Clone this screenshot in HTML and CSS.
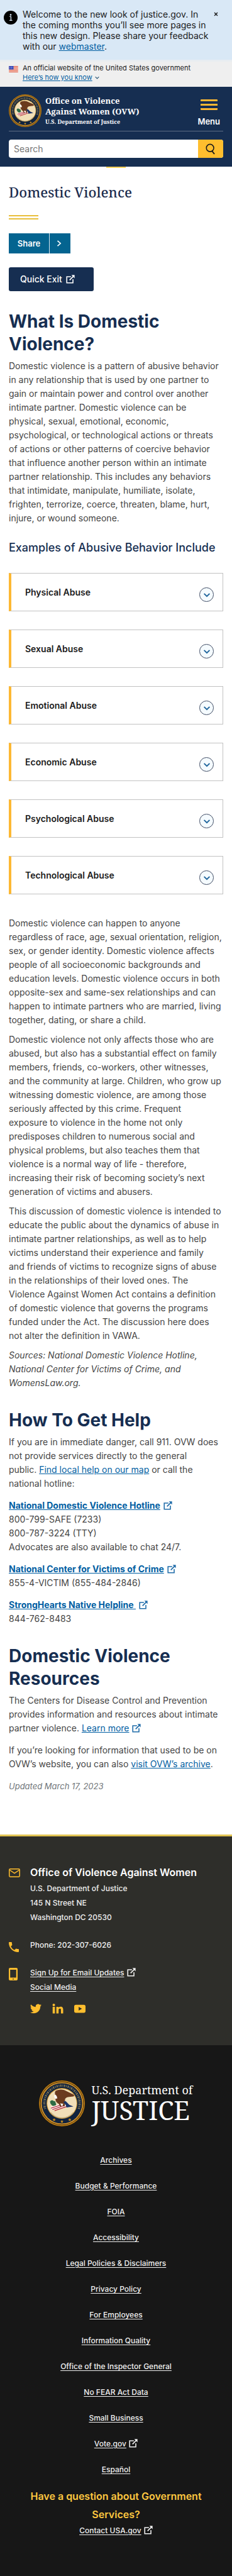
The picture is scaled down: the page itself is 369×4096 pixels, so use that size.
FILE: index.html
```
<!DOCTYPE html>
<html lang="en">
<head>
<meta charset="utf-8">
<meta name="viewport" content="width=device-width, initial-scale=1">
<title>Domestic Violence | Office on Violence Against Women</title>
<link rel="stylesheet" href="styles.css">
</head>
<body>
<svg class="sprite" aria-hidden="true">
  <symbol id="external" viewBox="0 0 16 16">
    <path d="M9 3.4H1.4v11.2h11.2V8" fill="none" stroke="currentColor" stroke-width="1.8"/>
    <path d="M6.5 9.5 13.6 2.4" fill="none" stroke="currentColor" stroke-width="1.9"/>
    <path d="M9.8.4h5.8v5.8z" fill="currentColor"/>
  </symbol>
  <symbol id="chevron-down" viewBox="0 0 16 16">
    <path d="M3 5.5 8 10.5 13 5.5" fill="none" stroke="currentColor" stroke-width="2.2"/>
  </symbol>
  <symbol id="seal" viewBox="0 0 100 100">
    <circle cx="50" cy="50" r="50" fill="#b97a12"/>
    <circle cx="50" cy="50" r="47.6" fill="#3b2c14"/>
    <circle cx="50" cy="50" r="46.4" fill="#d8952a"/>
    <circle cx="50" cy="50" r="44" fill="#10233f"/>
    <path d="M13.5 62A38.5 38.5 0 1 1 86.5 62" fill="none" stroke="#7a7050" stroke-width="5" stroke-dasharray="1.6 1.7 3 1.9"/>
    <path d="M33 82.2l1.1 2.2 2.4.3-1.8 1.7.5 2.4-2.2-1.2-2.2 1.2.5-2.4-1.8-1.7 2.4-.3zM50 86l1.1 2.2 2.4.3-1.8 1.7.5 2.4-2.2-1.2-2.2 1.2.5-2.4-1.8-1.7 2.4-.3zM67 82.2l1.1 2.2 2.4.3-1.8 1.7.5 2.4-2.2-1.2-2.2 1.2.5-2.4-1.8-1.7 2.4-.3z" fill="#c78d22"/>
    <circle cx="50" cy="50" r="33.5" fill="#c9922c"/>
    <circle cx="50" cy="50" r="32" fill="#f1dfb8"/>
    <path d="M26 70A31 31 0 0 0 75 69" fill="none" stroke="#b9a77c" stroke-width="2.5" stroke-dasharray="1.5 1.2"/>
    <path d="M24 46q4-5 8-1 5 0 4 4 3 3 0 6-5 2-8-1-4-3-4-8z" fill="#2f6b45"/>
    <path d="M25 58 54 49l7 7-32 9z" fill="#fff"/>
    <path d="M26 60.5 53 52M29 63.5 56 54.5M34 66 60 57" stroke="#b5283a" stroke-width="1.9" fill="none"/>
    <path d="M35 30q-2-8 6-9 7-2 14 0l19 9q5 3 1 5l-9 1q-6 0-9 4l-1 9q2 4-1 8l-5-3-3 4-4-7q-6-3-7-9 0-4-1-12z" fill="#6b3a1e"/>
    <path d="M34 31q-2 5 2 9l4-1q0-5-4-8z" fill="#fff"/>
    <path d="M53 47l5 6 2 6 15-2-9-4-8-8z" fill="#1c3468"/>
    <path d="M46 50l4 7 3-6z" fill="#fff"/>
  </symbol>
</svg>

<section class="notice" aria-label="Site notice">
  <svg class="notice-icon" viewBox="0 0 22 22" aria-hidden="true">
    <circle cx="11" cy="11" r="11" fill="#000"/>
    <circle cx="11" cy="6.6" r="1.3" fill="#d9e8f6"/>
    <path d="M9.2 9.4h2.2v6M9 15.4h4.6" fill="none" stroke="#d9e8f6" stroke-width="1.3"/>
  </svg>
  <p class="notice-text">Welcome to the new look of justice.gov. In the coming months you’ll see more pages in this new design. Please share your feedback with our <a class="link" href="#webmaster">webmaster</a>.</p>
  <button class="notice-close" type="button" aria-label="Close notice">
    <svg viewBox="0 0 8 8" aria-hidden="true"><path d="M1.2 1.2 6.8 6.8M6.8 1.2 1.2 6.8" stroke="#1b1b1b" stroke-width="1.6"/></svg>
  </button>
</section>

<section class="gov" aria-label="Official website of the United States government">
  <svg class="gov-flag" viewBox="0 0 16 11" aria-hidden="true">
    <path d="M0 0h16v11H0z" fill="#fff"/>
    <path d="M0 .5h16M0 2.5h16M0 4.5h16M0 6.5h16M0 8.5h16M0 10.5h16" stroke="#db3e1f"/>
    <path d="M0 0h8v6H0z" fill="#1e33b1"/>
    <path d="M1 1.5h6M1 3h6M1 4.5h6" stroke="#fff" stroke-width=".8" stroke-dasharray=".8 1"/>
  </svg>
  <div>
    <p>An official website of the United States government</p>
    <button class="gov-toggle" type="button" aria-expanded="false"><span>Here’s how you know</span><svg viewBox="0 0 16 16" aria-hidden="true"><use href="#chevron-down"/></svg></button>
  </div>
</section>

<header class="header">
  <div class="brand-row">
    <a class="brand" href="#home">
      <svg class="brand-seal" aria-hidden="true"><use href="#seal"/></svg>
      <span class="brand-text">
        <span class="brand-name">Office on Violence</span>
        <span class="brand-name">Against Women (OVW)</span>
        <span class="brand-dept">U.S. Department of Justice</span>
      </span>
    </a>
    <button class="menu" type="button">
      <span class="menu-bars" aria-hidden="true"></span>
      <span>Menu</span>
    </button>
  </div>
  <form class="search" role="search">
    <input class="search-input" type="search" placeholder="Search" aria-label="Search">
    <button class="search-button" type="submit" aria-label="Search">
      <svg viewBox="0 0 18 20" aria-hidden="true"><circle cx="8" cy="8" r="6.6" fill="none" stroke="#1b1b1b" stroke-width="1.8"/><path d="M11.5 13.5 15.8 19" stroke="#1b1b1b" stroke-width="2.2"/></svg>
    </button>
  </form>
</header>
<div class="marker"></div>

<main class="main">
  <h1 class="page-title">Domestic Violence</h1>
  <div class="rule"></div>
  <button class="share" type="button">
    <span class="share-label">Share</span>
    <span class="share-arrow"><svg viewBox="0 0 8 10" aria-hidden="true"><path d="M1.5.8 6.2 5 1.5 9.2" fill="none" stroke="#fff" stroke-width="1.6"/></svg></span>
  </button>
  <a class="quick-exit" href="#exit">Quick Exit <svg class="ext" aria-hidden="true"><use href="#external"/></svg></a>

  <section>
    <h2 class="heading">What Is Domestic Violence?</h2>
    <div class="prose">
      <p>Domestic violence is a pattern of abusive behavior in any relationship that is used by one partner to gain or maintain power and control over another intimate partner. Domestic violence can be physical, sexual, emotional, economic, psychological, or technological actions or threats of actions or other patterns of coercive behavior that influence another person within an intimate partner relationship. This includes any behaviors that intimidate, manipulate, humiliate, isolate, frighten, terrorize, coerce, threaten, blame, hurt, injure, or wound someone.</p>
    </div>
  </section>

  <section>
    <h3 class="subheading">Examples of Abusive Behavior Include</h3>
    <div class="accordion">
      <button class="accordion-item" type="button" aria-expanded="false"><span>Physical Abuse</span><span class="accordion-icon"><svg viewBox="0 0 16 16" aria-hidden="true"><use href="#chevron-down"/></svg></span></button>
      <button class="accordion-item" type="button" aria-expanded="false"><span>Sexual Abuse</span><span class="accordion-icon"><svg viewBox="0 0 16 16" aria-hidden="true"><use href="#chevron-down"/></svg></span></button>
      <button class="accordion-item" type="button" aria-expanded="false"><span>Emotional Abuse</span><span class="accordion-icon"><svg viewBox="0 0 16 16" aria-hidden="true"><use href="#chevron-down"/></svg></span></button>
      <button class="accordion-item" type="button" aria-expanded="false"><span>Economic Abuse</span><span class="accordion-icon"><svg viewBox="0 0 16 16" aria-hidden="true"><use href="#chevron-down"/></svg></span></button>
      <button class="accordion-item" type="button" aria-expanded="false"><span>Psychological Abuse</span><span class="accordion-icon"><svg viewBox="0 0 16 16" aria-hidden="true"><use href="#chevron-down"/></svg></span></button>
      <button class="accordion-item" type="button" aria-expanded="false"><span>Technological Abuse</span><span class="accordion-icon"><svg viewBox="0 0 16 16" aria-hidden="true"><use href="#chevron-down"/></svg></span></button>
    </div>
    <div class="prose prose-long">
      <p>Domestic violence can happen to anyone regardless of race, age, sexual orientation, religion, sex, or gender identity. Domestic violence affects people of all socioeconomic backgrounds and education levels. Domestic violence occurs in both opposite-sex and same-sex relationships and can happen to intimate partners who are married, living together, dating, or share a child.</p>
      <p>Domestic violence not only affects those who are abused, but also has a substantial effect on family members, friends, co-workers, other witnesses, and the community at large. Children, who grow up witnessing domestic violence, are among those seriously affected by this crime. Frequent<br>exposure to violence in the home not only<br>predisposes children to numerous social and<br>physical problems, but also teaches them that<br>violence is a normal way of life&nbsp;- therefore,<br>increasing their risk of becoming society’s next generation of victims and abusers.</p>
      <p>This discussion of domestic violence is intended to educate the public about the dynamics of abuse in intimate partner relationships, as well as to help victims understand their experience and family<br>and friends of victims to recognize signs of abuse<br>in the relationships of their loved ones. The<br>Violence Against Women Act contains a definition<br>of domestic violence that governs the programs funded under the Act. The discussion here does not alter the definition in VAWA.</p>
      <p><em>Sources: National Domestic Violence Hotline, National Center for Victims of Crime, and WomensLaw.org.</em></p>
    </div>
  </section>

  <section>
    <h2 class="heading">How To Get Help</h2>
    <div class="prose">
      <p>If you are in immediate danger, call 911. OVW does not provide services directly to the general<br>public. <a class="link" href="#map">Find local help on our map</a> or call the<br>national hotline:</p>
      <p><a class="link strong" href="#hotline">National Domestic Violence Hotline</a> <svg class="ext ext-blue" aria-hidden="true"><use href="#external"/></svg><br>800-799-SAFE (7233)<br>800-787-3224 (TTY)<br>Advocates are also available to chat 24/7.</p>
      <p><a class="link strong" href="#victims">National Center for Victims of Crime</a> <svg class="ext ext-blue" aria-hidden="true"><use href="#external"/></svg><br>855-4-VICTIM (855-484-2846)</p>
      <p><a class="link strong" href="#native">StrongHearts Native Helpline&nbsp;</a> <svg class="ext ext-blue" aria-hidden="true"><use href="#external"/></svg><br>844-762-8483</p>
    </div>
  </section>

  <section>
    <h2 class="heading">Domestic Violence Resources</h2>
    <div class="prose">
      <p>The Centers for Disease Control and Prevention provides information and resources about intimate partner violence. <a class="link" href="#cdc">Learn more</a> <svg class="ext ext-blue" aria-hidden="true"><use href="#external"/></svg></p>
      <p>If you’re looking for information that used to be on OVW’s website, you can also <a class="link" href="#archive">visit OVW’s archive</a>.</p>
      <p class="updated">Updated March 17, 2023</p>
    </div>
  </section>
</main>

<footer>
  <section class="contact" aria-label="Contact">
    <div class="contact-row">
      <svg class="icon-mail" viewBox="0 0 18 14" aria-hidden="true"><rect x=".8" y=".8" width="16.4" height="12.4" rx="1.4" fill="none" stroke="#ffbe2e" stroke-width="1.5"/><path d="M1.5 2.5 9 7.5l7.5-5" fill="none" stroke="#ffbe2e" stroke-width="1.5"/></svg>
      <div class="contact-text">
        <h2 class="contact-title">Office of Violence Against Women</h2>
        <address class="contact-address">U.S. Department of Justice<br>145 N Street NE<br>Washington DC 20530</address>
      </div>
    </div>
    <div class="contact-row">
      <svg class="icon-phone" viewBox="0 0 18 18" aria-hidden="true"><path d="M3.62 7.79c1.44 2.83 3.76 5.14 6.59 6.59l2.2-2.2c.27-.27.67-.36 1.02-.24 1.12.37 2.33.57 3.57.57.55 0 1 .45 1 1V17c0 .55-.45 1-1 1C7.61 18 0 10.39 0 1c0-.55.45-1 1-1h3.5c.55 0 1 .45 1 1 0 1.25.2 2.45.57 3.57.11.35.03.74-.25 1.02l-2.2 2.2z" fill="#ffbe2e"/></svg>
      <p>Phone: 202-307-6026</p>
    </div>
    <div class="contact-row">
      <svg class="icon-device" viewBox="0 0 14 20" aria-hidden="true"><path fill-rule="evenodd" d="M2 0h10a2 2 0 0 1 2 2v16a2 2 0 0 1-2 2H2a2 2 0 0 1-2-2V2a2 2 0 0 1 2-2zm.2 3v12.6h9.600V3zM6 17.300v1.200h2v-1.200z" fill="#ffbe2e"/></svg>
      <div>
        <p><a href="#updates">Sign Up for Email Updates</a> <svg class="ext" aria-hidden="true"><use href="#external"/></svg></p>
        <p><a href="#social">Social Media</a></p>
        <div class="social">
          <a href="#twitter" aria-label="Twitter"><svg viewBox="0 0 24 24" aria-hidden="true"><path d="M23.950 4.570a10 10 0 0 1-2.820.77 4.960 4.960 0 0 0 2.160-2.720c-.95.55-2 .95-3.130 1.180a4.920 4.920 0 0 0-8.380 4.480C7.690 8.090 4.070 6.130 1.640 3.160a4.920 4.920 0 0 0 1.520 6.570 4.900 4.900 0 0 1-2.230-.61v.06c0 2.390 1.690 4.380 3.950 4.830a5 5 0 0 1-2.210.08 4.940 4.940 0 0 0 4.600 3.420A9.870 9.870 0 0 1 0 19.540a14 14 0 0 0 7.550 2.210c9.050 0 14-7.500 14-13.980 0-.21 0-.42-.02-.63a9.940 9.940 0 0 0 2.460-2.550z" fill="#ffbe2e"/></svg></a>
          <a href="#linkedin" aria-label="LinkedIn"><svg viewBox="0 0 24 24" aria-hidden="true"><path d="M1 8h4.800v14H1zM3.400 1.200a2.700 2.700 0 1 1 0 5.400 2.700 2.700 0 0 1 0-5.400zM8.800 8h4.500v2c.8-1.400 2.300-2.400 4.400-2.400 4.500 0 5.600 2.800 5.600 6.700V22h-4.700v-6.900c0-1.700-.2-3.500-2.300-3.500s-2.700 1.700-2.700 3.400v7H8.800z" fill="#ffbe2e"/></svg></a>
          <a href="#youtube" aria-label="YouTube"><svg viewBox="0 0 24 24" aria-hidden="true"><path fill-rule="evenodd" d="M3.500 3.500h17Q24 3.500 24 7v10q0 3.500-3.500 3.500h-17Q0 20.500 0 17V7q0-3.500 3.500-3.500zM9.500 8v8l7-4z" fill="#ffbe2e"/></svg></a>
        </div>
      </div>
    </div>
  </section>
  <section class="agency" aria-label="U.S. Department of Justice">
    <a class="agency-logo" href="#doj">
      <svg class="agency-seal" aria-hidden="true"><use href="#seal"/></svg>
      <span class="agency-text"><span class="agency-small">U.S. Department of</span><span class="agency-large">JUSTICE</span></span>
    </a>
    <ul class="agency-links">
      <li><a href="#archives">Archives</a></li>
      <li><a href="#budget">Budget &amp; Performance</a></li>
      <li><a href="#foia">FOIA</a></li>
      <li><a href="#accessibility">Accessibility</a></li>
      <li><a href="#legal">Legal Policies &amp; Disclaimers</a></li>
      <li><a href="#privacy">Privacy Policy</a></li>
      <li><a href="#employees">For Employees</a></li>
      <li><a href="#quality">Information Quality</a></li>
      <li><a href="#oig">Office of the Inspector General</a></li>
      <li><a href="#nofear">No FEAR Act Data</a></li>
      <li><a href="#business">Small Business</a></li>
      <li><a href="#vote">Vote.gov</a> <svg class="ext" aria-hidden="true"><use href="#external"/></svg></li>
      <li><a href="#es" lang="es">Español</a></li>
    </ul>
    <h2 class="question">Have a question about Government Services?</h2>
    <p class="usagov"><a href="#usagov">Contact USA.gov</a> <svg class="ext" aria-hidden="true"><use href="#external"/></svg></p>
  </section>
</footer>
</body>
</html>
```
FILE: styles.css
```
* { box-sizing: border-box; }

body {
  margin: 0;
  background: #fff;
  color: #454545;
  font-family: Inter, "Liberation Sans", sans-serif;
  font-size: 14px;
  line-height: 22px;
}

h1, h2, h3, p, ul { margin: 0; padding: 0; font-weight: inherit; }
button, input { font: inherit; color: inherit; border: 0; margin: 0; padding: 0; background: none; }
button { cursor: pointer; }
svg { display: block; }
.sprite { position: absolute; width: 0; height: 0; }
.link { color: #005ea2; }
.strong { font-weight: 700; }
.ext { display: inline-block; width: 14px; height: 14px; margin-left: 1px; vertical-align: -2px; }
.ext-blue { color: #1f6ca9; }

/* Notice */
.notice { display: flex; align-items: flex-start; padding: 14px 22px 13px 6px; background: #d9e8f6; color: #1b1b1b; line-height: 17px; }
.notice-icon { flex: none; width: 22px; height: 22px; margin: 3px 8px 0 0; }
.notice-text { flex: 1; }
.notice-close { flex: none; display: grid; place-items: center; width: 8px; height: 16px; }
.notice-close svg { width: 7px; height: 7px; }

/* Government banner */
.gov { display: flex; gap: 7px; padding: 3px 14px 7px; border-top: 3px solid #e8edf1; background: #efefef; color: #1b1b1b; font-size: 11px; line-height: 15px; }
.gov-flag { flex: none; width: 15px; height: 10px; margin-top: 4px; }
.gov-toggle { display: flex; align-items: center; gap: 3px; color: #005ea2; }
.gov-toggle span { text-decoration: underline; }
.gov-toggle svg { width: 9px; height: 9px; color: #2c5878; }

/* Header */
.header { padding: 12px 14px 14px; background: #162e51; color: #fff; }
.brand-row { display: flex; justify-content: space-between; align-items: flex-start; padding-bottom: 6px; border-bottom: 1px solid #5c6d85; }
.brand { display: flex; align-items: center; gap: 6px; color: #fff; text-decoration: none; }
.brand-seal { width: 52px; height: 52px; }
.brand-text { display: flex; flex-direction: column; font-family: "Noto Serif", "Liberation Serif", serif; font-weight: 700; }
.brand-name { font-size: 13px; line-height: 17px; }
.brand-dept { font-size: 9px; line-height: 15px; }
.menu { display: flex; flex-direction: column; align-items: center; gap: 10px; padding: 8px 5px 0 0; font-size: 13px; font-weight: 600; line-height: 17px; }
.menu-bars { width: 27px; height: 17px; border: solid #fdb833; border-width: 3px 0; border-radius: 1px; background: linear-gradient(#fdb833, #fdb833) center / 100% 3px no-repeat; }
.search { display: flex; height: 29px; margin-top: 13px; border-radius: 4px; background: #fff; overflow: hidden; }
.search-input { flex: 1; min-width: 0; padding: 0 8px; color: #1b1b1b; appearance: none; }
.search-input::placeholder { color: #757575; opacity: 1; }
.search-button { display: grid; place-items: center; width: 40px; background: #ffbe2e; }
.search-button svg { width: 16px; height: 18px; }
.marker { width: 31px; height: 2px; margin: 0 auto; background: #ffd257; }

/* Content */
.main { padding: 23px 14px 66px; }
.page-title { color: #1b2b4d; font-family: "Noto Serif", "Liberation Serif", serif; font-size: 22px; font-weight: 500; line-height: 30px; }
.rule { width: 47px; height: 7px; margin-top: 22px; border: solid #e8bf3c; border-width: 2px 0; }
.share { display: flex; height: 32px; margin-top: 22px; background: #046490; color: #fff; font-size: 13px; font-weight: 600; }
.share-label { display: grid; place-items: center; width: 65px; border-right: 1px solid #d5e5ee; }
.share-arrow { display: grid; place-items: center; width: 33px; padding-right: 4px; }
.share svg { width: 8px; height: 10px; }
.share-label, .share-arrow { height: 32px; }
.quick-exit { display: flex; align-items: center; gap: 5px; width: 135px; height: 38px; margin-top: 22px; padding: 0 18px; border-radius: 3px; background: #162e51; color: #fff; font-weight: 500; text-decoration: none; white-space: nowrap; }
.heading { margin: 30px 0 6px; color: #162e51; font-size: 28px; font-weight: 700; line-height: 36px; }
.prose { display: flex; flex-direction: column; gap: 13px; }
.prose-long { gap: 9px; margin-top: 35px; }
.updated { color: #71767a; font-size: 13px; font-style: italic; }

.subheading { margin: 24px 0 28px; color: #162e51; font-size: 18px; font-weight: 500; line-height: 24px; }
.accordion { display: flex; flex-direction: column; gap: 29px; }
.accordion-item { display: flex; justify-content: space-between; align-items: center; height: 61px; padding: 0 14px 0 22px; border: 1px solid #c2c2c2; border-left: 4px solid #fdb833; color: #1b1b1b; font-weight: 600; text-align: left; }
.accordion-icon { display: grid; place-items: center; width: 23px; height: 23px; margin-top: 8px; border: 1px solid #3f4b63; border-radius: 50%; background: #f5fbff; color: #1f659c; }
.accordion-icon svg { width: 14px; height: 14px; }

/* Contact footer */
.contact { display: flex; flex-direction: column; gap: 21px; padding: 45px 14px 49px; border-top: 3px solid #e2c553; background: #2e2e2a; color: #f0f0f0; font-size: 12px; font-weight: 500; line-height: 23px; }
.contact a { color: inherit; text-underline-offset: 2px; }
.contact-row { display: grid; grid-template-columns: 34px 1fr; }
.contact-title { margin-bottom: 2px; color: #fff; font-size: 16px; font-weight: 600; line-height: 24px; }
.contact-address { font-style: normal; }
.icon-mail { width: 18px; height: 14px; margin-top: 6px; }
.icon-phone { width: 16px; height: 16px; margin-top: 7px; }
.icon-device { width: 14px; height: 20px; margin-top: 4px; }
.social { display: flex; gap: 17px; margin-top: 14px; }
.social svg { width: 18px; height: 18px; }

/* Agency footer */
.agency { padding: 56px 14px 62px; background: #171717; color: #f0f0f0; font-size: 12px; font-weight: 500; line-height: 20px; text-align: center; }
.agency a { color: inherit; text-underline-offset: 2px; }
.agency .agency-logo { display: flex; justify-content: center; align-items: center; gap: 10px; color: #fff; text-decoration: none; }
.agency-seal { width: 73px; height: 73px; }
.agency-text { display: flex; flex-direction: column; font-family: "Noto Serif", "Liberation Serif", serif; font-weight: 400; text-align: left; }
.agency-small { font-size: 18px; line-height: 20px; }
.agency-large { font-size: 41px; line-height: 44px; }
.agency-links { display: flex; flex-direction: column; gap: 21px; margin-top: 44px; list-style: none; }
.question { margin: 18px 28px 1px; color: #ffc83f; font-size: 16px; font-weight: 600; line-height: 29px; }
```
